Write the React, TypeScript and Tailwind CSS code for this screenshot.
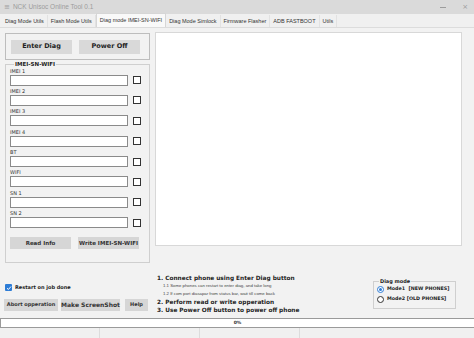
import React from "react";

const rows = ["IMEI 1", "IMEI 2", "IMEI 3", "IMEI 4", "BT", "WIFI", "SN 1", "SN 2"];
const tabs = [
  "Diag Mode Utils",
  "Flash Mode Utils",
  "Diag mode IMEI-SN-WIFI",
  "Diag Mode Simlock",
  "Firmware Flasher",
  "ADB FASTBOOT",
  "Utils",
];

export default function App() {
  return (
    <div
      className="w-[474px] h-[338px] bg-[#f2f2f2] flex flex-col overflow-hidden text-[#222]"
      style={{ fontFamily: '"DejaVu Sans", Verdana, sans-serif' }}
    >
      {/* Title bar */}
      <div className="h-[14px] bg-[#dadada] flex items-center pl-[4px] pr-[6px] text-[#9c9c9c]">
        <span className="text-[7px] leading-none mr-[3px]">≡</span>
        <span className="text-[6.5px] leading-none" style={{ fontFamily: '"Liberation Sans", Arial, sans-serif' }}>
          NCK Unisoc Online Tool 0.1
        </span>
        <div className="ml-auto flex items-center gap-[16px]">
          <span className="w-[6px] h-px bg-[#9c9c9c]" />
          <span className="text-[7px] leading-none">×</span>
        </div>
      </div>

      {/* Tabs */}
      <div
        className="h-[14px] flex items-end pl-[2px] border-b border-[#dcdcdc] bg-[#f0f0f0]"
        style={{ fontFamily: '"Liberation Sans", Arial, sans-serif' }}
      >
        {tabs.map((t, i) => (
          <div
            key={t}
            className={
              i === 2
                ? "h-[14px] px-[3px] flex items-center whitespace-nowrap text-[5.5px] bg-[#f9f9f9] border border-b-0 border-[#d6d6d6] text-[#333]"
                : "h-[12px] px-[3px] flex items-center whitespace-nowrap text-[5.5px] text-[#333] border-r border-[#e2e2e2]"
            }
          >
            {t}
          </div>
        ))}
      </div>

      {/* Main top section */}
      <div className="flex h-[235px]">
        <div className="ml-[5px] w-[145px] flex flex-col">
          <div className="mt-[5px] h-[27px] border border-[#bdbdbd] flex items-center gap-[7px] px-[5px]">
            <button className="w-[61px] h-[14px] bg-[#d9d9d9] text-[6.5px] font-bold text-[#222]">Enter Diag</button>
            <button className="w-[61px] h-[14px] bg-[#d9d9d9] text-[6.5px] font-bold text-[#222]">Power Off</button>
          </div>
          <fieldset className="mt-[2px] h-[201px] border border-[#cfcfcf] px-[4px] pb-0 m-0">
            <legend className="ml-[4px] px-px text-[5.5px] font-bold leading-none text-[#222]">IMEI-SN-WIFI</legend>
            <div className="flex flex-col">
              {rows.map((r) => (
                <div key={r} className="flex flex-col h-[20.4px]">
                  <span className="text-[5px] leading-[7px] text-[#333] h-[7px]">{r}</span>
                  <div className="flex items-center">
                    <div className="w-[118px] h-[11px] bg-white border border-[#8a8a8a]" />
                    <div className="ml-[5px] w-[8px] h-[8px] border border-[#333] bg-white" />
                  </div>
                </div>
              ))}
            </div>
            <div className="mt-[6px] flex gap-[7px]">
              <button className="w-[61px] h-[12px] bg-[#d6d6d6] text-[5.5px] font-bold text-[#333]">Read Info</button>
              <button className="w-[61px] h-[12px] bg-[#d6d6d6] text-[5.5px] font-bold text-[#333]">Write IMEI-SN-WIFI</button>
            </div>
          </fieldset>
        </div>
        <div className="ml-[5px] mt-[4px] w-[307px] h-[214px] bg-white border border-[#d8d8d8]" />
      </div>

      {/* Bottom section */}
      <div className="flex h-[55px]">
        <div className="w-[150px] pl-[4px] flex flex-col">
          <div className="mt-[21px] flex items-center gap-[3px] pl-px">
            <div className="w-[7px] h-[7px] bg-[#2d7cd6] rounded-[1px] flex items-center justify-center">
              <svg width="6" height="6" viewBox="0 0 6 6">
                <path d="M1 3.2 L2.4 4.5 L5 1.5" stroke="white" strokeWidth="1" fill="none" />
              </svg>
            </div>
            <span className="text-[5px] font-bold text-[#222]">Restart on job done</span>
          </div>
          <div className="mt-[7px] flex items-center gap-[3px]">
            <button className="w-[54px] h-[12px] bg-[#d6d6d6] text-[5px] font-bold text-[#333] whitespace-nowrap">Abort opperation</button>
            <button className="w-[59px] h-[12px] bg-[#d6d6d6] text-[6px] font-bold text-[#333] whitespace-nowrap">Make ScreenShot</button>
            <button className="ml-[2px] w-[23px] h-[12px] bg-[#d6d6d6] text-[5px] font-bold text-[#333]">Help</button>
          </div>
        </div>
        <div className="ml-[7px] pt-[11px] flex flex-col text-[#222]">
          <span className="text-[5.8px] font-bold leading-[8px] whitespace-nowrap">1. Connect phone using Enter Diag button</span>
          <span className="ml-[6px] text-[4.3px] leading-[8px] text-[#444] whitespace-nowrap" style={{ fontFamily: '"Liberation Sans", Arial, sans-serif' }}>
            1.1 Some phones can restart to enter diag, and take long
          </span>
          <span className="ml-[6px] text-[4.3px] leading-[8px] text-[#444] whitespace-nowrap" style={{ fontFamily: '"Liberation Sans", Arial, sans-serif' }}>
            1.2 If com port diasapar from status bar, wait till come back
          </span>
          <span className="text-[5.8px] font-bold leading-[8px] whitespace-nowrap">2. Perform read or write opperation</span>
          <span className="text-[5.8px] font-bold leading-[8px] whitespace-nowrap">3. Use Power Off button to power off phone</span>
        </div>
        <div className="ml-auto mr-[18px] mt-[16px]">
          <fieldset className="w-[83px] h-[30px] border border-[#cfcfcf] px-[3px] m-0">
            <legend className="ml-[2px] px-px text-[5px] font-bold leading-none text-[#222]">Diag mode</legend>
            <div className="flex items-center gap-[3px] mt-[2px]">
              <div className="w-[7px] h-[7px] rounded-full border border-[#2d7cd6] bg-white flex items-center justify-center">
                <div className="w-[3px] h-[3px] rounded-full bg-[#2d7cd6]" />
              </div>
              <span className="text-[4.8px] font-bold leading-none text-[#222] whitespace-nowrap">Mode1 &nbsp;[NEW PHONES]</span>
            </div>
            <div className="flex items-center gap-[3px] mt-[3px]">
              <div className="w-[7px] h-[7px] rounded-full border border-[#333] bg-white" />
              <span className="text-[4.8px] font-bold leading-none text-[#222] whitespace-nowrap">Mode2 [OLD PHONES]</span>
            </div>
          </fieldset>
        </div>
      </div>

      {/* Progress bar */}
      <div className="h-[10px] bg-white border-t border-b border-[#9a9a9a] border-l flex items-center justify-center">
        <span className="text-[4.5px] font-bold text-[#333] leading-none">0%</span>
      </div>

      {/* Status bar */}
      <div className="flex-1 flex bg-[#f0f0f0]">
        <div className="w-[100px] border-r border-[#dcdcdc]" />
        <div className="w-[100px] border-r border-[#dcdcdc]" />
        <div className="w-[100px] border-r border-[#dcdcdc]" />
        <div className="flex-1" />
      </div>
    </div>
  );
}
